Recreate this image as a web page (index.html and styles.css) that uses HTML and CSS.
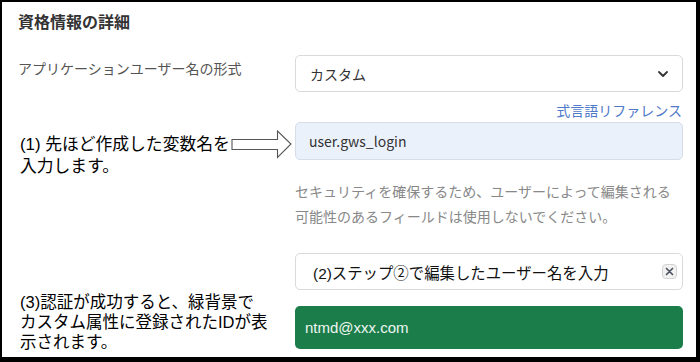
FILE: index.html
```html
<!DOCTYPE html>
<html lang="ja">
<head>
<meta charset="utf-8">
<link rel="stylesheet" href="styles.css">
</head>
<body>
<div class="panel">
  <div class="title">資格情報の詳細</div>

  <div class="row row-format">
    <div class="label">アプリケーションユーザー名の形式</div>
    <div class="select">
      <span>カスタム</span>
      <svg class="chevron" width="12" height="8" viewBox="0 0 12 8"><path d="M2 2 L6 6 L10 2" fill="none" stroke="#333" stroke-width="1.8" stroke-linecap="round" stroke-linejoin="round"/></svg>
    </div>
  </div>

  <div class="link-row"><span class="link">式言語リファレンス</span></div>

  <div class="row row-expr">
    <div class="note note1">
      (1) 先ほど作成した変数名を<br>入力します。
      <svg class="arrow" width="62" height="29" viewBox="0 0 62 29"><path d="M1 9.5 H46.5 V1 L60 14 L46.5 27.5 V19.5 H1 Z" fill="#fff" stroke="#555" stroke-width="1.1"/></svg>
    </div>
    <div class="input">user.gws_login</div>
  </div>

  <div class="row">
    <div></div>
    <div class="help">セキュリティを確保するため、ユーザーによって編集される<br>可能性のあるフィールドは使用しないでください。</div>
  </div>

  <div class="row row-test">
    <div class="note note3">(3)認証が成功すると、緑背景で<br>カスタム属性に登録されたIDが表<br>示されます。</div>
    <div class="fields">
      <div class="test-input">
        <span>(2)ステップ②で編集したユーザー名を入力</span>
        <span class="clear"><svg width="9" height="9" viewBox="0 0 9 9"><path d="M1.5 1.5 L7.5 7.5 M7.5 1.5 L1.5 7.5" stroke="#4d5563" stroke-width="1.7" stroke-linecap="round"/></svg></span>
      </div>
      <div class="result">ntmd@xxx.com</div>
    </div>
  </div>
</div>
</body>
</html>
```

FILE: styles.css
```css
* { box-sizing: border-box; }
html, body { margin: 0; padding: 0; background: #fff; }
body { font-family: "Noto Sans CJK JP", "Noto Sans", sans-serif; }

.panel {
  width: 700px;
  height: 362px;
  border-style: solid;
  border-color: #000;
  border-width: 2px 4px 5px 2px;
  padding: 9px 13px 0 16px;
  background: #fff;
  overflow: hidden;
}

.title {
  font-size: 16px;
  font-weight: bold;
  line-height: 20px;
  color: #333;
}

.row {
  display: grid;
  grid-template-columns: 277px 1fr;
  align-items: start;
}

.row-format { margin-top: 24px; }

.label {
  font-size: 14px;
  line-height: 20px;
  color: #555;
  padding-top: 3px;
}

.select {
  height: 37px;
  border: 1px solid #d9d9d9;
  border-radius: 5px;
  display: flex;
  align-items: center;
  justify-content: space-between;
  padding: 0 13px 0 14px;
  font-size: 14px;
  color: #333;
}

.link-row {
  margin-top: 8px;
  display: flex;
  justify-content: flex-end;
  line-height: 20px;
}
.link {
  font-size: 14px;
  color: #4f79c9;
  margin-right: 1px;
}

.row-expr { margin-top: 2px; }

.note {
  font-family: "Liberation Sans", "Noto Sans CJK JP", sans-serif;
  color: #000;
}

.note1 {
  position: relative;
  height: 38px;
  font-size: 16.8px;
  line-height: 21.5px;
  padding: 12px 0 0 2px;
}
.arrow {
  position: absolute;
  left: 213px;
  top: 8px;
}

.input {
  height: 38px;
  background: #ebf1fb;
  border: 1px solid #d6dde9;
  border-radius: 5px;
  display: flex;
  align-items: center;
  padding-left: 13px;
  font-size: 14px;
  color: #333;
}

.help {
  margin-top: 19px;
  font-size: 14px;
  line-height: 24.5px;
  color: #888;
}

.row-test { margin-top: 25px; }

.note3 {
  height: 96px;
  font-size: 16.5px;
  line-height: 20px;
  padding: 39px 0 0 2px;
}

.fields {
  display: flex;
  flex-direction: column;
  gap: 16px;
}

.test-input {
  height: 37px;
  border: 1px solid #dadada;
  border-radius: 5px;
  display: flex;
  align-items: center;
  justify-content: space-between;
  padding: 0 5px 0 17px;
  font-family: "Liberation Sans", "Noto Sans CJK JP", sans-serif;
  font-size: 15.4px;
  color: #111;
}

.clear {
  width: 15px;
  height: 15px;
  border: 1px solid #d2d2d2;
  border-radius: 4px;
  background: #f2f2f2;
  display: flex;
  align-items: center;
  justify-content: center;
}

.result {
  height: 43px;
  background: #1b7e4a;
  border-radius: 5px;
  display: flex;
  align-items: center;
  padding-left: 10px;
  font-family: "Liberation Sans", sans-serif;
  font-size: 15px;
  color: #eef6f1;
}
```
